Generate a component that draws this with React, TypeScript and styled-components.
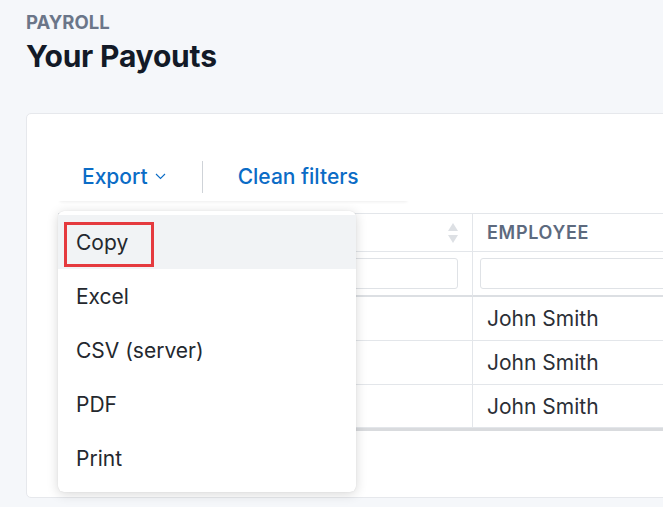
import React from 'react';
import styled, { createGlobalStyle } from 'styled-components';

const GlobalStyle = createGlobalStyle`
  html, body {
    margin: 0;
    padding: 0;
    background: #f5f7fa;
    font-family: Inter, "Noto Sans", "Liberation Sans", sans-serif;
    overflow: hidden;
  }
`;

const Page = styled.div`
  padding: 11px 0 0 26px;
  width: 663px;
  height: 507px;
  box-sizing: border-box;
`;

const Eyebrow = styled.div`
  font-size: 18.5px;
  font-weight: 700;
  color: #6b7689;
  line-height: 22px;
`;

const Title = styled.h1`
  margin: 5px 0 0;
  font-size: 30px;
  font-weight: 700;
  color: #131a27;
  line-height: 36px;
  letter-spacing: -0.2px;
`;

const Card = styled.div`
  position: relative;
  margin-top: 39px;
  width: 700px;
  height: 385px;
  box-sizing: border-box;
  background: #fff;
  border: 1px solid #e6e8ec;
  border-radius: 5px;
  padding: 38px 0 0 31px;
`;

const Toolbar = styled.div`
  display: inline-flex;
  align-items: center;
  height: 49px;
  padding-right: 26px;
  box-shadow: 0 3px 3px -2px rgba(0, 0, 0, 0.07);
`;

const ToolButton = styled.button`
  display: flex;
  align-items: center;
  gap: 7px;
  background: none;
  border: 0;
  padding: 0 24px;
  font-family: inherit;
  font-size: 21px;
  font-weight: 500;
  color: #0b6cc6;
  cursor: pointer;
`;

const Separator = styled.span`
  width: 1px;
  height: 32px;
  background: #cfd3d8;
  margin: 0 11px 0 12px;
`;

const Table = styled.div`
  margin-top: 12px;
  display: grid;
  grid-template-columns: 414px 1fr;
  border-top: 1px solid #e3e6ea;
  border-bottom: 3px solid #d9dbde;
`;

const Cell = styled.div<{ $h: number; $thick?: boolean; $last?: boolean }>`
  height: ${(p) => p.$h}px;
  box-sizing: border-box;
  display: flex;
  align-items: center;
  padding: 0 14px;
  border-left: ${(p) => (p.$last ? '1px solid #e3e6ea' : 'none')};
  border-bottom: ${(p) => (p.$thick ? '2px solid #dcdfe3' : '1px solid #e3e6ea')};
  position: relative;
`;

const HeadText = styled.span`
  font-size: 18px;
  font-weight: 600;
  letter-spacing: 0.7px;
  color: #5d6a7e;
`;

const SortIcon = styled.svg`
  position: absolute;
  right: 13px;
  top: 8px;
`;

const FilterInput = styled.div<{ $first?: boolean }>`
  height: 31px;
  flex: 1;
  box-sizing: border-box;
  border: 1px solid #dfe2e6;
  border-radius: 3px;
  margin-left: ${(p) => (p.$first ? '0' : '-7px')};
`;

const BodyText = styled.span`
  font-size: 21px;
  color: #2b2f36;
`;

const Menu = styled.div`
  position: absolute;
  left: 31px;
  top: 97px;
  width: 298px;
  box-sizing: border-box;
  padding: 4px 0 7px;
  background: #fff;
  border-radius: 6px;
  box-shadow: 0 2px 12px rgba(0, 0, 0, 0.16), 0 0 1px rgba(0, 0, 0, 0.15);
`;

const MenuItem = styled.div<{ $active?: boolean }>`
  position: relative;
  height: 54px;
  display: flex;
  align-items: center;
  padding-left: 18px;
  font-size: 21px;
  color: #24282e;
  background: ${(p) => (p.$active ? '#f1f3f5' : 'transparent')};
`;

const Highlight = styled.span`
  position: absolute;
  left: 6px;
  top: 7px;
  width: 90px;
  height: 45px;
  box-sizing: border-box;
  border: 3px solid #e53a3e;
`;

const rows = ['John Smith', 'John Smith', 'John Smith'];
const items = ['Copy', 'Excel', 'CSV (server)', 'PDF', 'Print'];

export default function App() {
  return (
    <>
      <GlobalStyle />
      <Page>
        <Eyebrow>PAYROLL</Eyebrow>
        <Title>Your Payouts</Title>
        <Card>
          <Toolbar>
            <ToolButton>
              Export
              <svg width="11" height="7" viewBox="0 0 11 7">
                <path d="M1 1l4.5 4.5L10 1" fill="none" stroke="#0b6cc6" strokeWidth="1.1" />
              </svg>
            </ToolButton>
            <Separator />
            <ToolButton>Clean filters</ToolButton>
          </Toolbar>
          <Table>
            <Cell $h={38}>
              <SortIcon width="12" height="22" viewBox="0 0 12 22">
                <path d="M6 1l5 8H1z" fill="#dde0e4" />
                <path d="M6 21l5-8H1z" fill="#dde0e4" />
              </SortIcon>
            </Cell>
            <Cell $h={38} $last>
              <HeadText>EMPLOYEE</HeadText>
            </Cell>
            <Cell $h={45} $thick>
              <FilterInput $first />
            </Cell>
            <Cell $h={45} $thick $last>
              <FilterInput />
            </Cell>
            {rows.map((r, i) => (
              <React.Fragment key={i}>
                <Cell $h={i === rows.length - 1 ? 43 : 44} />
                <Cell $h={i === rows.length - 1 ? 43 : 44} $last>
                  <BodyText>{r}</BodyText>
                </Cell>
              </React.Fragment>
            ))}
          </Table>
          <Menu>
            {items.map((it, i) => (
              <MenuItem key={it} $active={i === 0}>
                {i === 0 && <Highlight />}
                {it}
              </MenuItem>
            ))}
          </Menu>
        </Card>
      </Page>
    </>
  );
}
